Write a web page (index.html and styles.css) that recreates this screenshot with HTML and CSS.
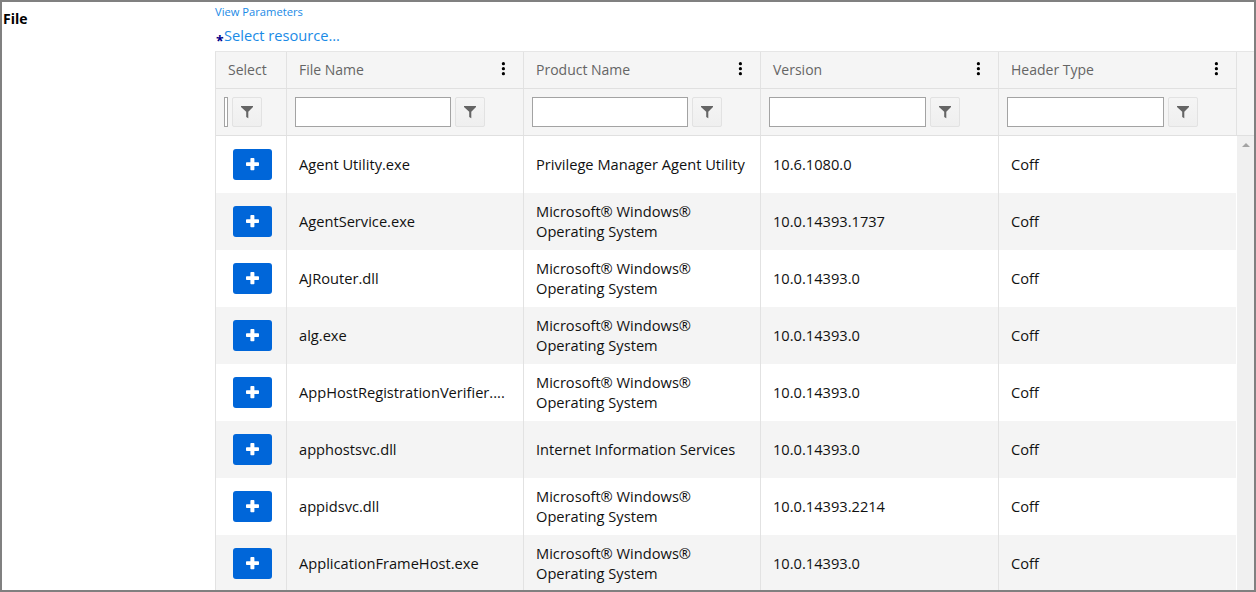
FILE: index.html
```html
<!DOCTYPE html>
<html lang="en">
<head>
<meta charset="utf-8">
<title>File resource</title>
<link rel="stylesheet" href="styles.css">
</head>
<body>
<svg class="sprites" aria-hidden="true">
  <symbol id="filter" viewBox="0 0 12 13"><path d="M0 0H12V1L7.3 5.8V12.2L5.2 11V5.8L0 1Z"/></symbol>
  <symbol id="plus" viewBox="0 0 13 13"><path d="M5.2 0H7.6Q8.4 0 8.4 .8V4.2H12.2Q13 4.2 13 5V7.2Q13 8 12.2 8H8.4V11.4Q8.4 12.2 7.6 12.2H5.2Q4.4 12.2 4.4 11.4V8H.8Q0 8 0 7.2V5Q0 4.2 .8 4.2H4.4V.8Q4.4 0 5.2 0Z"/></symbol>
  <symbol id="dots" viewBox="0 0 4 14"><circle cx="2.4" cy="1.7" r="1.6"/><circle cx="2.4" cy="6.7" r="1.6"/><circle cx="2.4" cy="11.7" r="1.6"/></symbol>
</svg>
<div class="frame">
  <div class="label">File</div>
  <main class="field">
    <a class="params">View Parameters</a>
    <div class="resource"><span class="required">*</span><a>Select resource...</a></div>
    <div class="grid">
      <div class="head">
        <div class="columns titles">
          <div class="cell">Select</div>
          <div class="cell">File Name<svg class="dots"><use href="#dots"/></svg></div>
          <div class="cell">Product Name<svg class="dots"><use href="#dots"/></svg></div>
          <div class="cell">Version<svg class="dots"><use href="#dots"/></svg></div>
          <div class="cell">Header Type<svg class="dots"><use href="#dots"/></svg></div>
        </div>
        <div class="columns filters">
          <div class="cell"><input class="box" aria-label="Select"><button class="filter"><svg><use href="#filter"/></svg></button></div>
          <div class="cell"><input class="box" aria-label="File Name"><button class="filter"><svg><use href="#filter"/></svg></button></div>
          <div class="cell"><input class="box" aria-label="Product Name"><button class="filter"><svg><use href="#filter"/></svg></button></div>
          <div class="cell"><input class="box" aria-label="Version"><button class="filter"><svg><use href="#filter"/></svg></button></div>
          <div class="cell"><input class="box" aria-label="Header Type"><button class="filter"><svg><use href="#filter"/></svg></button></div>
        </div>
      </div>
      <div class="content">
        <div class="rows">
          <div class="columns row"><div class="cell"><button class="add"><svg><use href="#plus"/></svg></button></div><div class="cell"><span>Agent Utility.exe</span></div><div class="cell"><p>Privilege Manager Agent Utility</p></div><div class="cell">10.6.1080.0</div><div class="cell">Coff</div></div>
          <div class="columns row"><div class="cell"><button class="add"><svg><use href="#plus"/></svg></button></div><div class="cell"><span>AgentService.exe</span></div><div class="cell"><p>Microsoft® Windows® Operating System</p></div><div class="cell">10.0.14393.1737</div><div class="cell">Coff</div></div>
          <div class="columns row"><div class="cell"><button class="add"><svg><use href="#plus"/></svg></button></div><div class="cell"><span>AJRouter.dll</span></div><div class="cell"><p>Microsoft® Windows® Operating System</p></div><div class="cell">10.0.14393.0</div><div class="cell">Coff</div></div>
          <div class="columns row"><div class="cell"><button class="add"><svg><use href="#plus"/></svg></button></div><div class="cell"><span>alg.exe</span></div><div class="cell"><p>Microsoft® Windows® Operating System</p></div><div class="cell">10.0.14393.0</div><div class="cell">Coff</div></div>
          <div class="columns row"><div class="cell"><button class="add"><svg><use href="#plus"/></svg></button></div><div class="cell"><span>AppHostRegistrationVerifier....</span></div><div class="cell"><p>Microsoft® Windows® Operating System</p></div><div class="cell">10.0.14393.0</div><div class="cell">Coff</div></div>
          <div class="columns row"><div class="cell"><button class="add"><svg><use href="#plus"/></svg></button></div><div class="cell"><span>apphostsvc.dll</span></div><div class="cell"><p>Internet Information Services</p></div><div class="cell">10.0.14393.0</div><div class="cell">Coff</div></div>
          <div class="columns row"><div class="cell"><button class="add"><svg><use href="#plus"/></svg></button></div><div class="cell"><span>appidsvc.dll</span></div><div class="cell"><p>Microsoft® Windows® Operating System</p></div><div class="cell">10.0.14393.2214</div><div class="cell">Coff</div></div>
          <div class="columns row"><div class="cell"><button class="add"><svg><use href="#plus"/></svg></button></div><div class="cell"><span>ApplicationFrameHost.exe</span></div><div class="cell"><p>Microsoft® Windows® Operating System</p></div><div class="cell">10.0.14393.0</div><div class="cell">Coff</div></div>
        </div>
        <div class="scrollbar"><svg viewBox="0 0 8 4"><path d="M0 4L4 0L8 4Z"/></svg></div>
      </div>
    </div>
  </main>
</div>
</body>
</html>
```
FILE: styles.css
```css
* { box-sizing: border-box; }

body {
  margin: 0;
  background: #fff;
  color: #111;
  font: 14px/20px "Open Sans", sans-serif;
}

.sprites { display: none; }

.frame {
  display: grid;
  grid-template-columns: 213px 1fr;
  width: 1256px;
  height: 592px;
  border: 2px solid #808080;
  overflow: hidden;
}

.label {
  padding: 7px 0 0 1px;
  color: #000;
  font-weight: 700;
}

.field { min-width: 0; }

.params {
  display: block;
  height: 21px;
  color: #1a8ae6;
  font-size: 11.2px;
}

.resource {
  display: flex;
  height: 28px;
  color: #1a8ae6;
  font-size: 14.65px;
}

.resource a { padding-top: 2px; }

.required {
  width: 9px;
  padding: 8px 0 0 1px;
  color: #00008b;
  font-size: 14px;
  font-weight: 700;
}

.grid {
  width: 1039px;
  border-top: 1px solid #e6e6e6;
  border-left: 1px solid #e2e2e2;
}

.head {
  height: 84px;
  border-bottom: 1px solid #e0e0e0;
  background: #f5f5f5;
  color: #656565;
}

.columns {
  display: grid;
  grid-template-columns: 71px 237px 237px 238px 238px;
  width: 1021px;
}

.cell {
  display: flex;
  align-items: center;
  min-width: 0;
  padding-left: 12px;
  border-right: 1px solid #e2e2e2;
}

.titles {
  height: 37px;
  border-bottom: 1px solid #e0e0e0;
}

.dots {
  width: 4px;
  height: 14px;
  margin: 0 18px 2px auto;
  fill: #000;
}

.filters { height: 46px; }

.filters .cell {
  gap: 4px;
  padding: 0 38px 0 8px;
}

.filters .cell:first-child { padding-right: 24px; }

.box {
  flex: 1;
  min-width: 4px;
  height: 30px;
  padding: 0;
  border: 1px solid #a3a3a3;
  background: #fff;
}

.filter {
  display: flex;
  flex: none;
  align-items: center;
  justify-content: center;
  width: 30px;
  height: 30px;
  padding: 0;
  border: 1px solid #e2e2e2;
  border-radius: 2px;
  background: linear-gradient(#f5f5f5, #efefef);
}

.filter svg {
  width: 12px;
  height: 13px;
  fill: #656565;
}

.content {
  display: flex;
  justify-content: space-between;
}

.row {
  height: 57px;
  font-size: 14.65px;
}

.row:nth-child(even) { background: #f4f4f4; }

.row .cell { padding-bottom: 2px; }

.row .cell:last-child { border-right-color: #fff; }

.row .cell:first-child {
  justify-content: center;
  padding: 0 0 0 2px;
}

.row p {
  width: 212px;
  margin: 0;
}

.row span { white-space: nowrap; }

.add {
  display: flex;
  align-items: center;
  justify-content: center;
  width: 39px;
  height: 31px;
  padding: 0 0 1px;
  border: 0;
  border-radius: 3px;
  background: #0066d9;
}

.add svg {
  width: 13px;
  height: 13px;
  fill: #fff;
}

.scrollbar {
  display: flex;
  justify-content: center;
  width: 17px;
  padding-top: 7px;
  background: #f0f0f0;
}

.scrollbar svg {
  width: 8px;
  height: 4px;
  fill: #a3a3a3;
}
```
